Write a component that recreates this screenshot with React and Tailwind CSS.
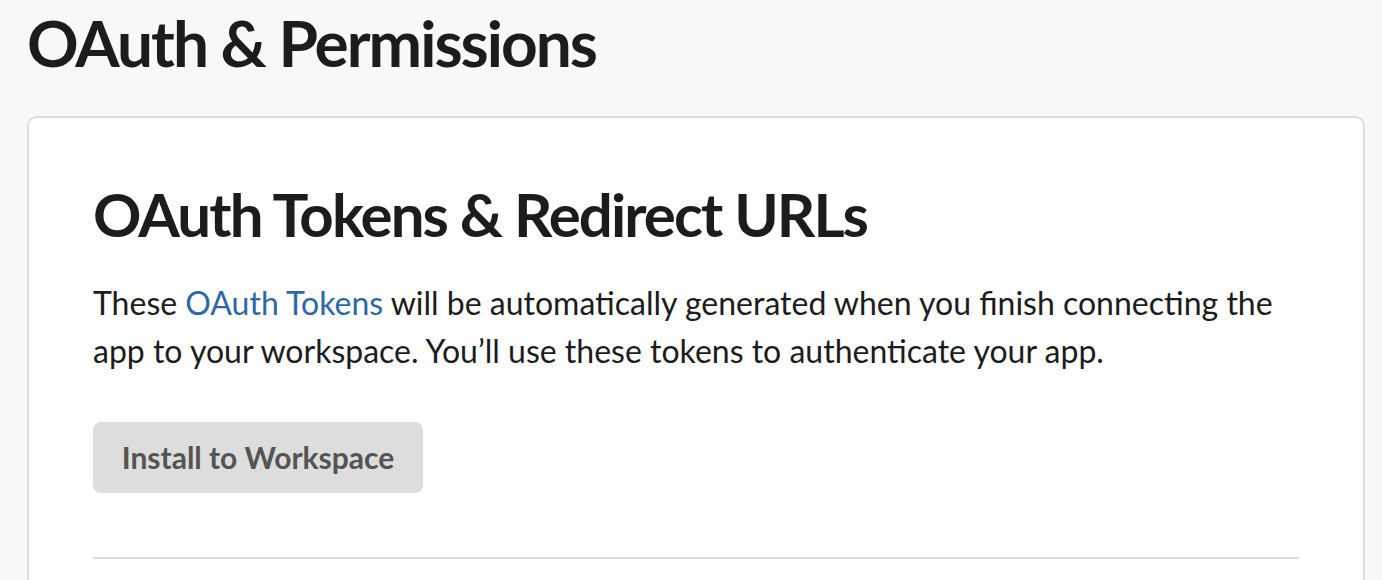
import React from "react";

export default function App() {
  return (
    <div className="min-h-screen bg-[#f8f8f8] pl-[27px] pr-[17px] pt-[5px] font-['Lato',sans-serif] text-[#1d1c1d]">
      <h1 className="text-[64px] leading-[1.2] font-bold tracking-[-2px]">OAuth &amp; Permissions</h1>

      <section className="mt-[34px] rounded-[10px] border-2 border-[#dddddd] bg-white px-[64px] pt-[60px] pb-[80px]">
        <h2 className="text-[60px] leading-[1.2] font-bold tracking-[-1.9px]">OAuth Tokens &amp; Redirect URLs</h2>

        <p className="mt-[29px] text-[32px] leading-[48px]">
          These{" "}
          <a href="#" className="text-[#2d68a6]">
            OAuth Tokens
          </a>{" "}
          will be automatically generated when you finish connecting the app to your workspace. You’ll use these
          tokens to authenticate your app.
        </p>

        <button
          type="button"
          className="mt-[47px] h-[71px] w-[330px] rounded-[8px] bg-[#dddddd] text-[30px] font-bold text-[#545454]"
        >
          Install to Workspace
        </button>

        <hr className="mt-[64px] border-0 border-t-2 border-[#dddddd]" />
      </section>
    </div>
  );
}
